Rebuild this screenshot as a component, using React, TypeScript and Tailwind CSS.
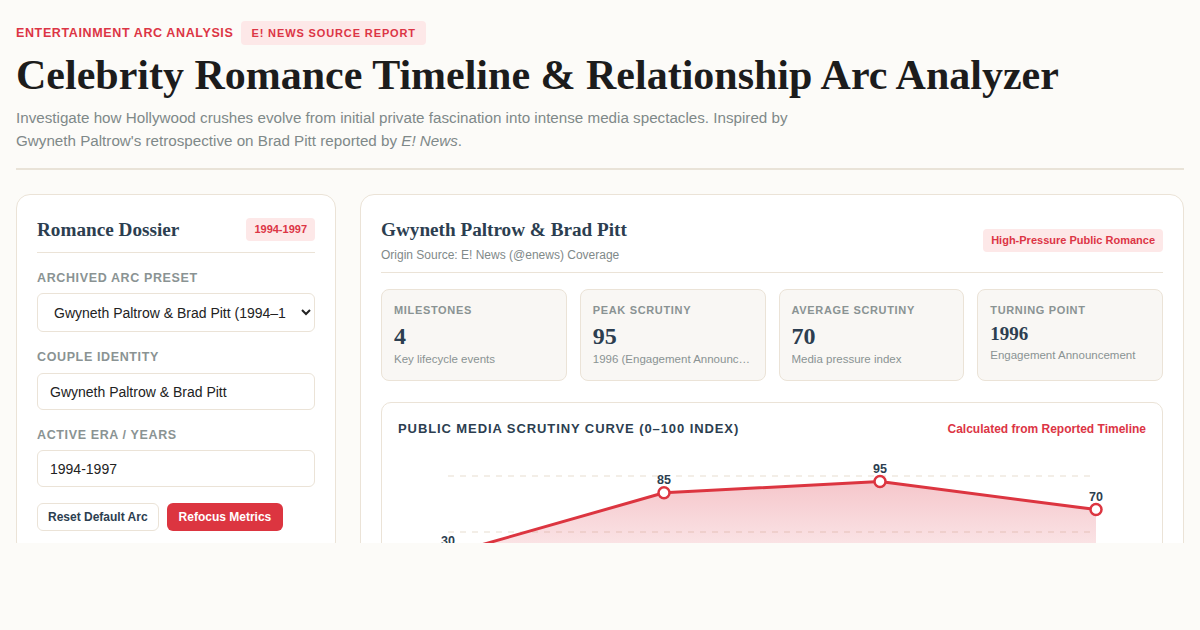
import { useState } from "react";

const points = [
  { year: "1994", label: "First Meeting", value: 30 },
  { year: "1995", label: "Public Debut", value: 85 },
  { year: "1996", label: "Engagement Announcement", value: 95 },
  { year: "1997", label: "Split", value: 70 },
];

const sans = { fontFamily: '"Liberation Sans", Arial, sans-serif' };
const serif = { fontFamily: '"Liberation Serif", "Times New Roman", serif' };

const ScrutinyChart = () => {
  const w = 748;
  const h = 160;
  const x0 = 50;
  const step = 216;
  const toY = (v: number) => 137 - v * 1.12;
  const coords = points.map((p, i) => ({ x: x0 + i * step, y: toY(p.value), v: p.value }));
  const line = coords.map((c, i) => `${i === 0 ? "M" : "L"}${c.x},${c.y}`).join(" ");
  const area = `${line} L${coords[coords.length - 1].x},${toY(0)} L${coords[0].x},${toY(0)} Z`;

  return (
    <svg width={w} height={h} viewBox={`0 0 ${w} ${h}`} className="block">
      <defs>
        <linearGradient id="scrutinyFill" x1="0" y1="0" x2="0" y2="1">
          <stop offset="0%" stopColor="#dc3545" stopOpacity="0.28" />
          <stop offset="100%" stopColor="#dc3545" stopOpacity="0.04" />
        </linearGradient>
      </defs>
      {[100, 50].map((g) => (
        <line
          key={g}
          x1={x0}
          x2={x0 + step * 3 - 6}
          y1={toY(g)}
          y2={toY(g)}
          stroke="#efe9df"
          strokeWidth="1.5"
          strokeDasharray="6 6"
        />
      ))}
      <path d={area} fill="url(#scrutinyFill)" />
      <path d={line} fill="none" stroke="#dc3540" strokeWidth="3" strokeLinejoin="round" />
      {coords.map((c) => (
        <g key={c.x}>
          <circle cx={c.x} cy={c.y} r="5.5" fill="#ffffff" stroke="#dc3540" strokeWidth="2.5" />
          <text
            x={c.x}
            y={c.y - 9}
            textAnchor="middle"
            fontSize="12.5"
            fontWeight="700"
            fill="#2c3e50"
            style={sans}
          >
            {c.v}
          </text>
        </g>
      ))}
    </svg>
  );
};

const StatCard = ({
  label,
  value,
  note,
  small,
}: {
  label: string;
  value: string;
  note: string;
  small?: boolean;
}) => (
  <div className="bg-[#f9f7f4] border border-[#ebe3d7] rounded-lg px-3 pt-[13px] pb-[14px] min-w-0">
    <div className="text-[11px] leading-[14px] font-bold tracking-[0.06em] text-[#8a9393] uppercase" style={sans}>
      {label}
    </div>
    <div
      className={`font-bold text-[#2c3e50] leading-none ${small ? "text-[19px] mt-[7px]" : "text-[24px] mt-[7px]"}`}
      style={serif}
    >
      {value}
    </div>
    <div
      className={`text-[11.5px] leading-[14px] text-[#8a9393] truncate ${small ? "mt-[5px]" : "mt-[4px]"}`}
      style={sans}
    >
      {note}
    </div>
  </div>
);

export default function App() {
  const [couple, setCouple] = useState("Gwyneth Paltrow & Brad Pitt");
  const [era, setEra] = useState("1994-1997");

  return (
    <div className="h-[630px] bg-[#fcfbf8]" style={sans}>
      <div className="h-[543px] overflow-hidden px-4 pt-[21px]">
        {/* Header */}
        <div className="flex items-center gap-2">
          <span className="text-[12.5px] font-bold tracking-[0.05em] text-[#dc3545]">
            ENTERTAINMENT ARC ANALYSIS
          </span>
          <span className="bg-[#fde8e8] text-[#dc3545] text-[11px] font-bold tracking-[0.08em] rounded px-[10px] h-6 flex items-center">
            E! NEWS SOURCE REPORT
          </span>
        </div>
        <h1 className="text-[42px] font-bold text-[#1c1c1c] leading-[46px] mt-[7px]" style={serif}>
          Celebrity Romance Timeline &amp; Relationship Arc Analyzer
        </h1>
        <p className="text-[15.2px] leading-[23px] text-[#7f8989] max-w-[800px] mt-[8px]">
          Investigate how Hollywood crushes evolve from initial private fascination into intense media
          spectacles. Inspired by Gwyneth Paltrow's retrospective on Brad Pitt reported by <em>E! News</em>.
        </p>
        <div className="h-[2px] bg-[#e9e3d8] mt-[16px]" />

        {/* Body */}
        <div className="flex gap-6 mt-6 items-start">
          {/* Left dossier */}
          <div className="w-[320px] shrink-0 bg-white border border-[#ebe3d7] rounded-[14px] px-5 pt-[23px] pb-6">
            <div className="flex items-center justify-between pb-[11px] border-b border-[#ebe3d7]">
              <h2 className="text-[19.2px] leading-[23px] font-bold text-[#2c3e50]" style={serif}>
                Romance Dossier
              </h2>
              <span className="bg-[#fde8e8] text-[#dc3545] text-[11px] font-bold rounded px-2 h-[23px] flex items-center">
                1994-1997
              </span>
            </div>

            <label className="block text-[12.5px] leading-4 font-bold tracking-[0.05em] text-[#8a9393] mt-[17px]">
              ARCHIVED ARC PRESET
            </label>
            <select className="mt-[7px] w-full h-[39px] border border-[#ebe3d7] rounded-md px-3 text-sm text-[#222] bg-white">
              <option>Gwyneth Paltrow &amp; Brad Pitt (1994–1997)</option>
              <option>Jennifer Aniston &amp; Brad Pitt (1998–2005)</option>
            </select>

            <label className="block text-[12.5px] leading-4 font-bold tracking-[0.05em] text-[#8a9393] mt-[17px]">
              COUPLE IDENTITY
            </label>
            <input
              value={couple}
              onChange={(e) => setCouple(e.target.value)}
              className="mt-[8px] w-full h-[37px] border border-[#ebe3d7] rounded-md px-3 text-sm text-[#222] outline-none"
            />

            <label className="block text-[12.5px] leading-4 font-bold tracking-[0.05em] text-[#8a9393] mt-[17px]">
              ACTIVE ERA / YEARS
            </label>
            <input
              value={era}
              onChange={(e) => setEra(e.target.value)}
              className="mt-[7px] w-full h-[37px] border border-[#ebe3d7] rounded-md px-3 text-sm text-[#222] outline-none"
            />

            <div className="flex gap-2 mt-4">
              <button className="h-[28px] px-[10px] border border-[#ebe3d7] rounded-md bg-white text-[12px] font-bold text-[#2c3e50]">
                Reset Default Arc
              </button>
              <button className="h-[28px] px-3 rounded-md bg-[#dc3540] text-[12px] font-bold text-white">
                Refocus Metrics
              </button>
            </div>
          </div>

          {/* Right analysis */}
          <div className="flex-1 min-w-0 bg-white border border-[#ebe3d7] rounded-[14px] px-5 pt-[23px] pb-6">
            <div className="flex items-center justify-between pb-[9px] border-b border-[#ebe3d7]">
              <div>
                <h2 className="text-[19.2px] font-bold text-[#2c3e50] leading-[23px]" style={serif}>
                  Gwyneth Paltrow &amp; Brad Pitt
                </h2>
                <p className="text-[12px] leading-4 text-[#7f8989] mt-[6px]">Origin Source: E! News (@enews) Coverage</p>
              </div>
              <span className="bg-[#fde8e8] text-[#dc3545] text-[11px] font-bold rounded px-2 h-[23px] flex items-center">
                High-Pressure Public Romance
              </span>
            </div>

            <div className="grid grid-cols-4 gap-[13px] mt-4">
              <StatCard label="Milestones" value="4" note="Key lifecycle events" />
              <StatCard label="Peak Scrutiny" value="95" note="1996 (Engagement Announcement)" />
              <StatCard label="Average Scrutiny" value="70" note="Media pressure index" />
              <StatCard label="Turning Point" value="1996" note="Engagement Announcement" small />
            </div>

            <div className="mt-[21px] border border-[#ebe3d7] rounded-[10px] px-4 pt-[16px] pb-4">
              <div className="flex items-center justify-between">
                <h3 className="text-[13px] font-bold tracking-[0.07em] text-[#2c3e50]">
                  PUBLIC MEDIA SCRUTINY CURVE (0–100 INDEX)
                </h3>
                <span className="text-[12px] font-bold text-[#dc3545]">Calculated from Reported Timeline</span>
              </div>
              <div className="mt-[12px]">
                <ScrutinyChart />
              </div>
            </div>
          </div>
        </div>
      </div>
    </div>
  );
}
